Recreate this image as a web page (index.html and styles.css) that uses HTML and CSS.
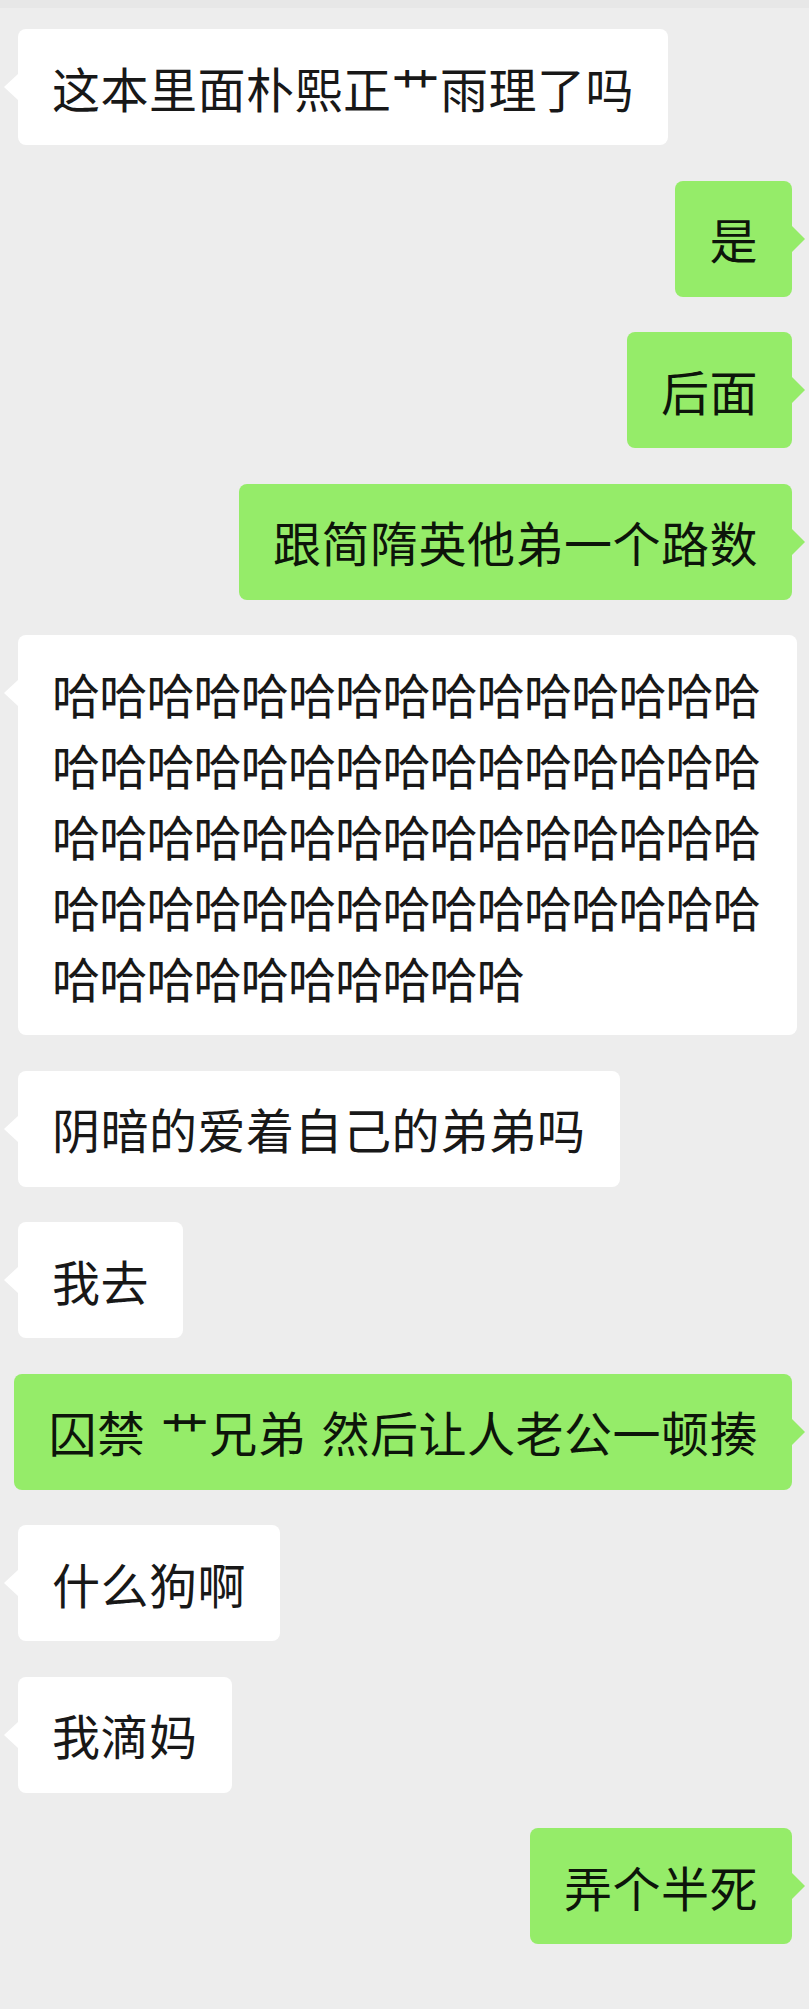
FILE: index.html
```html
<!DOCTYPE html>
<html>
  <head>
    <meta http-equiv="Content-Type" content="text/html; charset=utf-8"/>
    <link rel="stylesheet" href="styles.css">
  </head>
  <body>
    <div class="topbar"></div>
    <div class="chat">
      <div class="row left"><div class="msg">这本里面朴熙正艹雨理了吗</div></div>
      <div class="row right"><div class="msg">是</div></div>
      <div class="row right"><div class="msg">后面</div></div>
      <div class="row right"><div class="msg">跟简隋英他弟一个路数</div></div>
      <div class="row left"><div class="msg haha">哈哈哈哈哈哈哈哈哈哈哈哈哈哈哈哈哈哈哈哈哈哈哈哈哈哈哈哈哈哈哈哈哈哈哈哈哈哈哈哈哈哈哈哈哈哈哈哈哈哈哈哈哈哈哈哈哈哈哈哈哈哈哈哈哈哈哈哈哈哈</div></div>
      <div class="row left"><div class="msg">阴暗的爱着自己的弟弟吗</div></div>
      <div class="row left"><div class="msg">我去</div></div>
      <div class="row right"><div class="msg">囚禁 艹兄弟 然后让人老公一顿揍</div></div>
      <div class="row left"><div class="msg">什么狗啊</div></div>
      <div class="row left"><div class="msg">我滴妈</div></div>
      <div class="row right"><div class="msg">弄个半死</div></div>
    </div>
  </body>
</html>
```

FILE: styles.css
```css
body {
  margin: 0px;
  padding: 0px;
  background: #ededed;
  font-family: "Noto Sans CJK SC", sans-serif;
}

div.topbar {
  height: 8px;
  background: #e7e7e7;
}

div.chat {
  display: flex;
  flex-direction: column;
  gap: 35.5px;
  padding: 21px 17px 0px 18px;
}

div.row {
  display: flex;
}

div.row.right {
  justify-content: flex-end;
}

div.msg {
  position: relative;
  flex-shrink: 0;
  box-sizing: border-box;
  max-width: 779px;
  padding: 22.5px 34px;
  font-size: 48px;
  line-height: 71px;
  letter-spacing: 0.5px;
  word-spacing: 4px;
  color: #181818;
  background: #ffffff;
  border-radius: 8px;
}

div.msg.haha {
  letter-spacing: -0.8px;
}

div.row.right div.msg {
  background: #95ec69;
  color: #0d150a;
}

/* the little pointer on the side of each bubble */
div.msg::before {
  content: "";
  position: absolute;
  top: 45px;
  width: 0px;
  height: 0px;
  border-top: 13px solid transparent;
  border-bottom: 13px solid transparent;
}

div.row.left div.msg::before {
  left: -14px;
  border-right: 14px solid #ffffff;
}

div.row.right div.msg::before {
  right: -13px;
  border-left: 13px solid #95ec69;
}
```
